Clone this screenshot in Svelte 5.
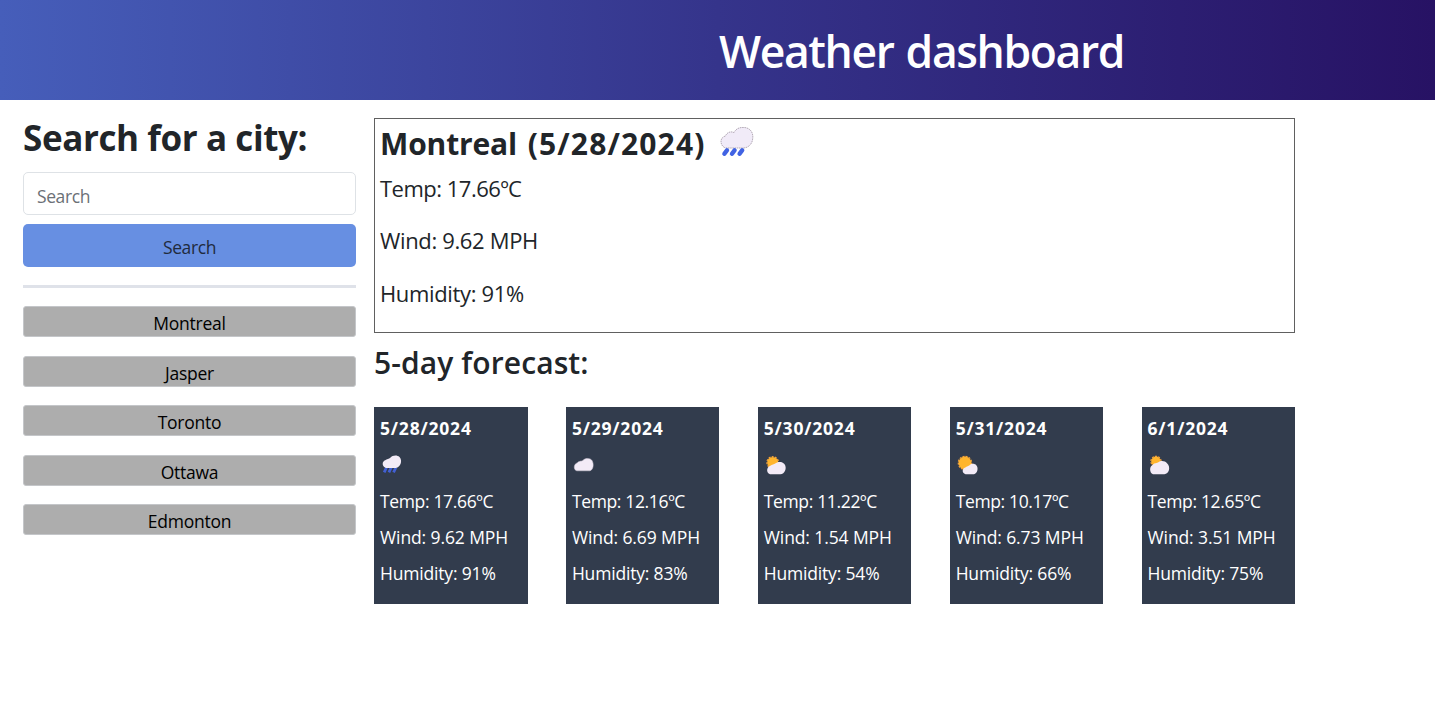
<script>
  const cities = ['Montreal', 'Jasper', 'Toronto', 'Ottawa', 'Edmonton'];
  const days = [
    { date: '5/28/2024', icon: 'rain', temp: '17.66', wind: '9.62', humidity: 91 },
    { date: '5/29/2024', icon: 'cloud', temp: '12.16', wind: '6.69', humidity: 83 },
    { date: '5/30/2024', icon: 'partly', temp: '11.22', wind: '1.54', humidity: 54 },
    { date: '5/31/2024', icon: 'sunny', temp: '10.17', wind: '6.73', humidity: 66 },
    { date: '6/1/2024', icon: 'mostly', temp: '12.65', wind: '3.51', humidity: 75 }
  ];
</script>

{#snippet sun(cx, cy, r)}
  <circle {cx} {cy} {r} fill="#ffb52e" />
  <circle {cx} {cy} r={r + 0.3} fill="none" stroke="#f5a33b" stroke-width="1.2" stroke-dasharray="2 1.2" />
{/snippet}

<header><h1>Weather dashboard</h1></header>
<main>
  <aside>
    <h2>Search for a city:</h2>
    <input type="text" placeholder="Search" aria-label="City" />
    <button class="search">Search</button>
    <hr />
    <div class="cities">
      {#each cities as city}
        <button class="city">{city}</button>
      {/each}
    </div>
  </aside>
  <section>
    <div class="today">
      <div class="title">
        <h3>Montreal <span>(5/28/2024)</span></h3>
        <svg width="36" height="34" viewBox="0 0 36 34">
          <path d="M5.5 22.5C0.8 20 0.5 12.5 6.5 11C7.8 7.2 12 6 15 7.6C17 3.5 20.5 2.4 24 2.5C31 2.2 34.5 7.5 33.7 13.5C33.2 19.5 29 23 24 23H8Z" fill="#f1ebf8" stroke="#aaa0ae" stroke-width="0.9" stroke-dasharray="1.5 0.7" />
          <path d="M8 25.2L5.4 28.8M15.6 25.2L13 28.8M23.2 25.2L20.6 28.8" stroke="#4163e3" stroke-width="4.4" stroke-linecap="round" />
        </svg>
      </div>
      <p>Temp: 17.66ºC</p>
      <p>Wind: 9.62 MPH</p>
      <p>Humidity: 91%</p>
    </div>
    <h4>5-day forecast:</h4>
    <div class="forecast">
      {#each days as day}
        <article>
          <h5>{day.date}</h5>
          <svg width="24" height="24" viewBox="0 0 24 24">
            {#if day.icon === 'rain'}
              <path d="M6.5 15.5L4.2 20.3M11.2 15.5L8.9 20.3M15.9 15.5L13.6 20.3" stroke="#4260d4" stroke-width="2.8" />
              <path d="M5 15.5C1.8 14 2 9.4 5.2 8.3C6.8 6.8 9 7 10.3 5.7C12.4 3.3 17 2.6 19.5 5.1C23 9 20.3 15.7 15.8 16H6Z" fill="#f3ebf7" />
            {:else if day.icon === 'cloud'}
              <path d="M4 18.5C1.3 17 2 11.5 5.2 11C6.8 8.7 9.7 9.4 11 8.4C13 5.8 18.3 5.8 20 8.5C22.1 12 21.4 17.5 18 18.8H5Z" fill="#f3ebf7" stroke="#d2cad9" stroke-width="0.5" />
            {:else if day.icon === 'partly'}
              {@render sun(8.7, 10.5, 5.5)}
              <path d="M6 22.3C1.9 20.9 2.6 15 6 14C8.3 12.4 10 12.6 11.2 11.6C13.2 9.4 18.4 9.3 20.4 12C23.4 16 20.8 22.1 16.4 22.3H7Z" fill="#f3ebf7" />
            {:else if day.icon === 'sunny'}
              {@render sun(9, 11, 6.4)}
              <path d="M9.5 22.3C5.6 21.1 6 16.5 9.3 15.6C10.8 14 12.6 14.3 13.5 13.3C15.6 11.2 18.8 11.5 20.3 13.3C23 16.3 21 21.9 18 22.3H10Z" fill="#f3ebf7" />
            {:else}
              {@render sun(8, 9.4, 4.8)}
              <path d="M5 22.2C1.3 20.8 1.3 14 4.6 12.9C6.3 10.8 9.2 11.3 10.4 10.3C12.6 8.1 17.3 8.7 19 11.3C23.2 15.3 20.8 22 16.4 22.2H6Z" fill="#f3ebf7" />
            {/if}
          </svg>
          <p class="temp">Temp: {day.temp}ºC</p>
          <p class="wind">Wind: {day.wind} MPH</p>
          <p>Humidity: {day.humidity}%</p>
        </article>
      {/each}
    </div>
  </section>
</main>

<style>
  :global(body) { margin: 0; background: #fff; }
  header, main { font-family: "Open Sans", "Noto Sans", sans-serif; color: #212529; }
  h1, h2, h3, h4, h5, p { margin: 0; white-space: nowrap; }
  header {
    height: 99.5px;
    box-sizing: border-box;
    padding: 21px 0 0 719px;
    background: linear-gradient(90deg, #465eba 0%, #35348b 50%, #271264 100%);
  }
  h1 { color: #fff; font-size: 44.5px; line-height: 60px; font-weight: 600; letter-spacing: -1.4px; word-spacing: 2px; }
  main { display: flex; gap: 18px; padding: 18.5px 0 0 23px; }
  aside { width: 333px; display: flex; flex-direction: column; }
  h2 { font-size: 35px; line-height: 40px; font-weight: 700; margin-bottom: 14px; letter-spacing: -0.4px; }
  input {
    box-sizing: border-box;
    height: 43px;
    padding: 4px 13px 0;
    border: 1px solid #dee2e6;
    border-radius: 5px;
    font: 17.5px "Open Sans", sans-serif;
    letter-spacing: -0.4px;
  }
  input::placeholder { color: #6b7076; opacity: 1; }
  button { font-family: inherit; padding: 0; display: flex; align-items: center; justify-content: center; }
  .search { height: 43px; padding-top: 3px; margin-top: 9px; border: 0; border-radius: 5px; background: #678fe2; color: #212b3d; font-size: 17.5px; letter-spacing: -0.4px; }
  hr { width: 100%; height: 3px; margin: 17.5px 0 18.5px; border: 0; background: #dfe2e9; }
  .cities { display: grid; gap: 18.5px; }
  .city { height: 31px; padding-top: 3px; border: 1px solid #c4c6c9; border-radius: 3px; background: #adadad; color: #000; font-size: 17.5px; letter-spacing: -0.25px; box-sizing: border-box; }
  section { width: 921px; }
  .today { box-sizing: border-box; height: 215px; border: 1px solid #606060; padding: 5px; }
  .title { display: flex; gap: 13.5px; height: 38px; }
  .title svg { margin-top: 1px; }
  h3 { font-size: 30px; line-height: 40px; font-weight: 700; letter-spacing: -0.15px; word-spacing: 3px; }
  h3 span { letter-spacing: 1.15px; }
  .today p { font-size: 22px; line-height: 28px; margin: 12px 0 24.3px; letter-spacing: -0.35px; }
  .today .title + p { letter-spacing: -0.5px; }
  .today p + p { margin-top: 0; }
  h4 { font-size: 30px; line-height: 36px; font-weight: 600; margin: 12px 0 26px; letter-spacing: 0.1px; }
  .forecast { display: flex; justify-content: space-between; }
  article { width: 153.5px; height: 197px; box-sizing: border-box; padding: 8px 6px; background: #323c4d; color: #fff; }
  h5 { font-size: 17.5px; line-height: 26px; font-weight: 700; letter-spacing: 0.8px; }
  article svg { display: block; margin: 11px 0 12px; }
  article p { font-size: 17.5px; line-height: 26px; margin-bottom: 10px; letter-spacing: -0.18px; }
  article .temp { letter-spacing: -0.35px; }
  article .wind { letter-spacing: -0.1px; }
</style>
